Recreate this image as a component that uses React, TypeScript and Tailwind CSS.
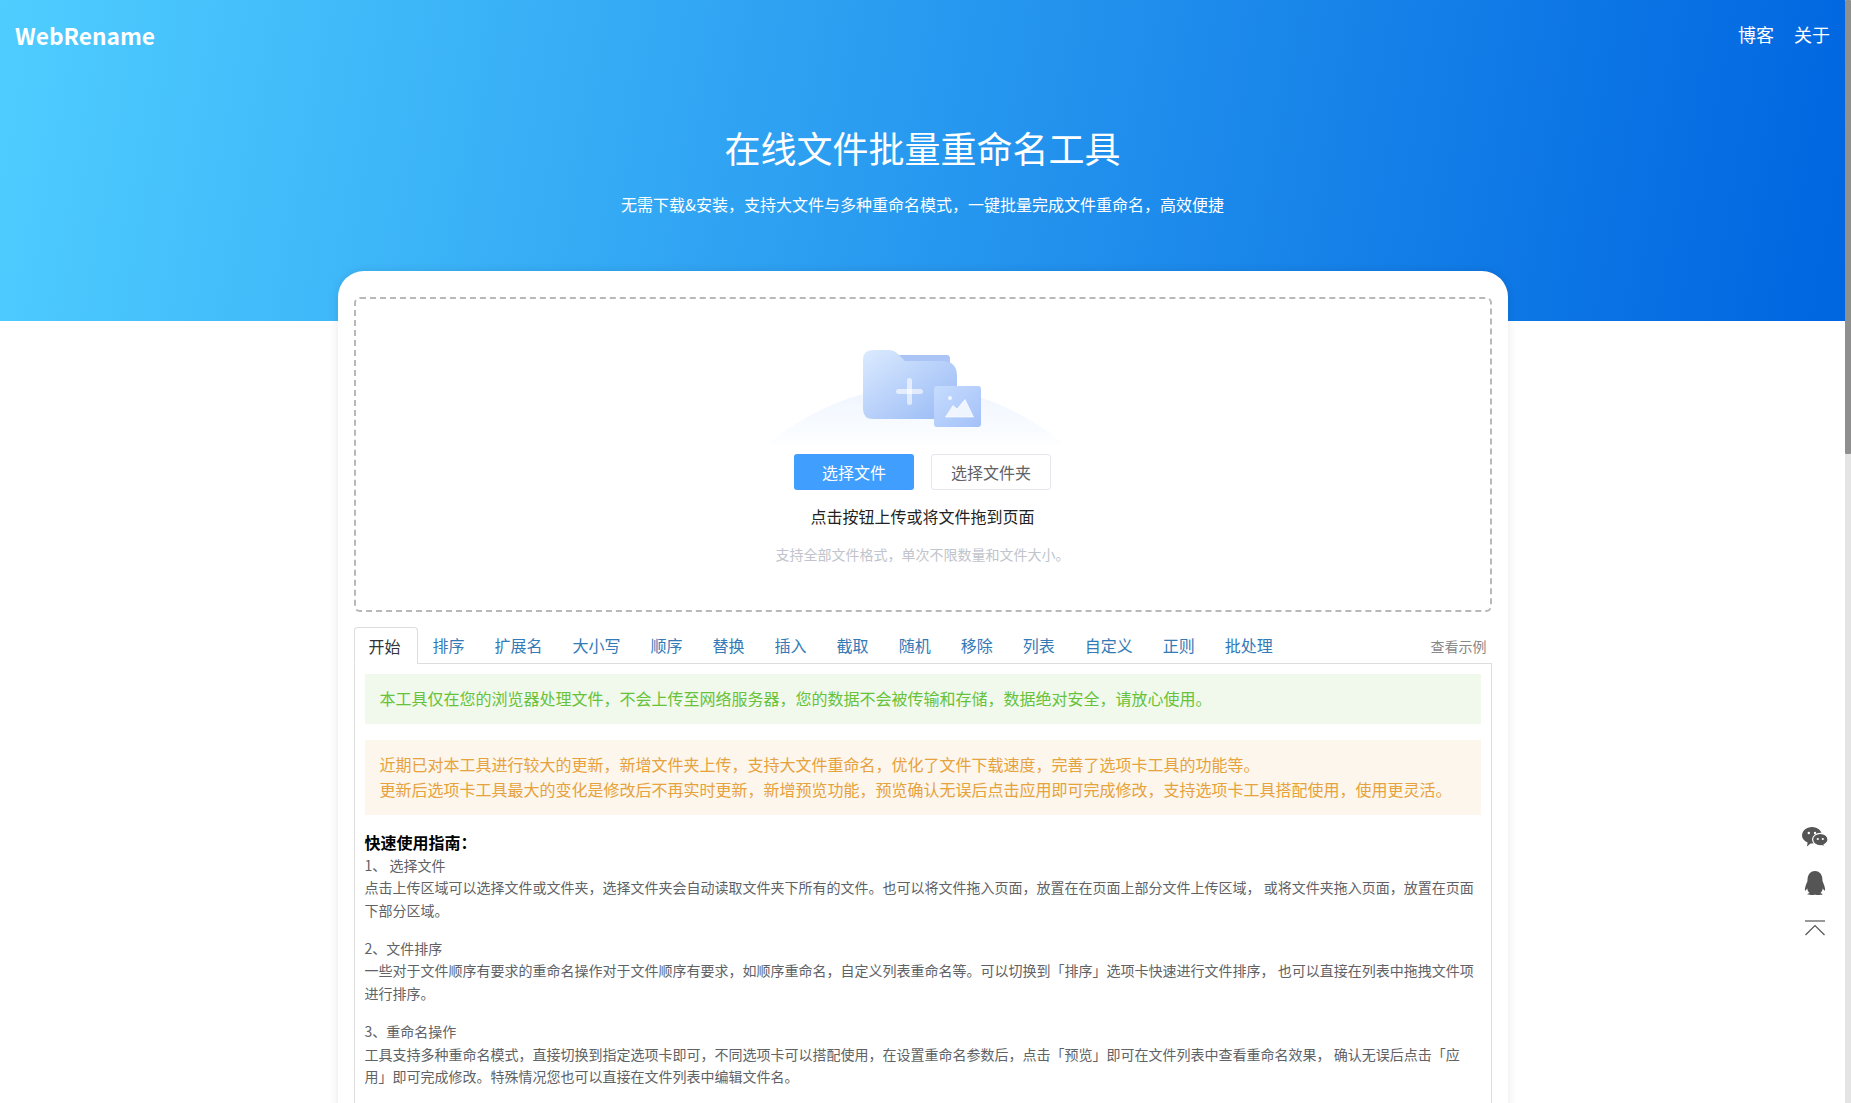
import { FaQq } from "react-icons/fa";

const tabs = ["排序", "扩展名", "大小写", "顺序", "替换", "插入", "截取", "随机", "移除", "列表", "自定义", "正则", "批处理"];

const guide = [
  {
    title: "1、 选择文件",
    text: "点击上传区域可以选择文件或文件夹\uFF0C选择文件夹会自动读取文件夹下所有的文件。也可以将文件拖入页面\uFF0C放置在在页面上部分文件上传区域\uFF0C 或将文件夹拖入页面\uFF0C放置在页面下部分区域。",
  },
  {
    title: "2、文件排序",
    text: "一些对于文件顺序有要求的重命名操作对于文件顺序有要求\uFF0C如顺序重命名\uFF0C自定义列表重命名等。可以切换到「排序」选项卡快速进行文件排序\uFF0C 也可以直接在列表中拖拽文件项进行排序。",
  },
  {
    title: "3、重命名操作",
    text: "工具支持多种重命名模式\uFF0C直接切换到指定选项卡即可\uFF0C不同选项卡可以搭配使用\uFF0C在设置重命名参数后\uFF0C点击「预览」即可在文件列表中查看重命名效果\uFF0C 确认无误后点击「应用」即可完成修改。特殊情况您也可以直接在文件列表中编辑文件名。",
  },
];

function UploadArt() {
  return (
    <svg width="313" height="98" viewBox="0 0 313 98" fill="none">
      <defs>
        <linearGradient id="dome" x1="0" y1="0" x2="0" y2="1">
          <stop offset="0" stopColor="#eff5ff" />
          <stop offset="0.7" stopColor="#f8fbff" />
          <stop offset="1" stopColor="#fdfeff" />
        </linearGradient>
        <linearGradient id="folder" x1="0" y1="0" x2="1" y2="1">
          <stop offset="0" stopColor="#dbeaff" />
          <stop offset="1" stopColor="#97b9f5" />
        </linearGradient>
        <linearGradient id="photo" x1="0" y1="0" x2="1" y2="1">
          <stop offset="0" stopColor="#c6dcff" />
          <stop offset="1" stopColor="#a3c1f8" />
        </linearGradient>
      </defs>
      <path d="M1 98C40 65 90 42 150 38C210 42 260 65 299 98Z" fill="url(#dome)" />
      <path d="M125 8H181Q184 8 184 12V20H125Z" fill="#a9c4f5" />
      <path d="M97 13Q97 3 107 3H122Q128 3 132 7L139 14H176Q191 14 191 29V72H107Q97 72 97 62Z" fill="url(#folder)" />
      <rect x="130" y="42" width="27" height="5" rx="2.5" fill="#ffffff" fillOpacity="0.6" />
      <rect x="141" y="31" width="5" height="27" rx="2.5" fill="#ffffff" fillOpacity="0.6" />
      <rect x="168" y="39" width="47" height="41" rx="3" fill="url(#photo)" />
      <circle cx="184" cy="51" r="2" fill="#ffffff" fillOpacity="0.8" />
      <path d="M179.5 70L187 58.5L191 62L199 52.5L207.5 70Z" fill="#ffffff" fillOpacity="0.8" stroke="#ffffff" strokeOpacity="0.8" strokeWidth="0.8" strokeLinejoin="round" />
    </svg>
  );
}

function WechatIcon() {
  return (
    <svg width="26" height="21" viewBox="0 0 26 21">
      <path d="M5 19.5L5.6 15.6C2.2 14.2 0 11.6 0 8.6C0 3.9 4.4 0 10 0C15.6 0 20 3.9 20 8.6C20 13.3 15.6 16.6 10 16.6L8.6 16.6Z" fill="#555555" />
      <circle cx="6.8" cy="6" r="1.2" fill="#ffffff" />
      <circle cx="13" cy="6" r="1.2" fill="#ffffff" />
      <path d="M22.4 20.5L22 17.8C24.4 16.6 26 15 26 12.6C26 9 22.4 6.4 18.3 6.4C14.2 6.4 10.6 9 10.6 12.6C10.6 16.2 14.2 18.8 18.3 18.8C18.9 18.8 19.5 18.7 20 18.6Z" fill="#555555" stroke="#ffffff" strokeWidth="1.2" />
      <circle cx="15.8" cy="12" r="1.1" fill="#ffffff" />
      <circle cx="20.8" cy="12" r="1.1" fill="#ffffff" />
    </svg>
  );
}

function ScrollBar() {
  return (
    <div className="w-[6px] h-full bg-[#e4e4e4] shrink-0">
      <div className="h-[454px] bg-[#8f8f8f] rounded-[1px]"></div>
    </div>
  );
}

function SideTools() {
  return (
    <div className="absolute right-[23px] top-[827px] flex flex-col items-center text-[#555555]">
      <WechatIcon />
      <FaQq className="h-[24px] w-[24px] mt-[23px]" />
      <svg className="mt-[25px]" width="20" height="16" viewBox="0 0 20 16" fill="none" stroke="#555555" strokeWidth="1.2">
        <path d="M0 1H20" />
        <path d="M0.5 15L10 5.5L19.5 15" />
      </svg>
    </div>
  );
}

export default function App() {
  return (
    <div className="h-screen flex overflow-hidden bg-white font-['Noto_Sans_CJK_SC','Noto_Sans',sans-serif] relative">
      <div className="flex-1 min-w-0 overflow-hidden">
        <header className="h-[321px] bg-[linear-gradient(100deg,#4fcdff,#0065e0)] text-white px-[15px]">
          <div className="flex items-center justify-between h-[72px]">
            <span className="font-bold text-[22.7px]">WebRename</span>
            <div className="flex gap-[20px] text-[18px] -mt-[4px]">
              <span>博客</span>
              <span>关于</span>
            </div>
          </div>
          <h1 className="text-center text-[36px] leading-[50px] mt-[50px]">在线文件批量重命名工具</h1>
          <p className="text-center text-[16px] leading-[26px] mt-[19px]">{"无需下载&安装\uFF0C支持大文件与多种重命名模式\uFF0C一键批量完成文件重命名\uFF0C高效便捷"}</p>
        </header>

        <main className="w-[1170px] mx-auto -mt-[50px] bg-white rounded-t-[26px] shadow-[0_0_10px_rgba(0,0,0,0.1)] px-[16px] pt-[26px] pb-[40px] relative">
          <section className="h-[315px] border-2 border-dashed border-[#b8b8b8] rounded-[6px] flex flex-col items-center pt-[48px]">
            <UploadArt />
            <div className="flex gap-[17px] mt-[9px] text-[16px]">
              <button className="w-[120px] h-[36px] rounded-[3px] bg-[#409eff] text-white">选择文件</button>
              <button className="w-[120px] h-[36px] rounded-[3px] bg-white border border-[#e4e7ed] text-[#606266]">选择文件夹</button>
            </div>
            <p className="text-[16px] leading-[24px] text-[#222222] mt-[14px]">点击按钮上传或将文件拖到页面</p>
            <p className="text-[14px] leading-[20px] text-[#c0c4cc] mt-[16px]">{"支持全部文件格式\uFF0C单次不限数量和文件大小。"}</p>
          </section>

          <div className="flex items-center mt-[15px] h-[36px] text-[16px]">
            <span className="h-[37px] pl-[14px] pr-[16px] border border-[#dddddd] border-b-white rounded-t-[4px] bg-white text-[#333333] leading-[36px] relative z-10 -mb-px">开始</span>
            {tabs.map((tab) => (
              <span key={tab} className="px-[15px] text-[#337ab7]">{tab}</span>
            ))}
            <span className="ml-auto pr-[5px] pt-[3px] text-[14px] text-[#888888]">查看示例</span>
          </div>

          <div className="border border-[#dddddd] p-[10px]">
            <div className="bg-[#f0f9eb] text-[#67c23a] text-[16px] leading-[25.6px] px-[15px] py-[12px]">
              {"本工具仅在您的浏览器处理文件\uFF0C不会上传至网络服务器\uFF0C您的数据不会被传输和存储\uFF0C数据绝对安全\uFF0C请放心使用。"}
            </div>
            <div className="bg-[#fdf6ec] text-[#e6a23c] text-[16px] leading-[25.6px] px-[15px] py-[12px] mt-[16px]">
              <p>{"近期已对本工具进行较大的更新\uFF0C新增文件夹上传\uFF0C支持大文件重命名\uFF0C优化了文件下载速度\uFF0C完善了选项卡工具的功能等。"}</p>
              <p>{"更新后选项卡工具最大的变化是修改后不再实时更新\uFF0C新增预览功能\uFF0C预览确认无误后点击应用即可完成修改\uFF0C支持选项卡工具搭配使用\uFF0C使用更灵活。"}</p>
            </div>
            <h2 className="text-[16px] leading-[24px] font-bold text-black mt-[15px]">{"快速使用指南\uFF1A"}</h2>
            {guide.map((item) => (
              <div key={item.title} className="text-[14px] leading-[22.4px] text-[#606266] mb-[16px]">
                <p>{item.title}</p>
                <p>{item.text}</p>
              </div>
            ))}
          </div>
        </main>
      </div>
      <ScrollBar />
      <SideTools />
    </div>
  );
}
